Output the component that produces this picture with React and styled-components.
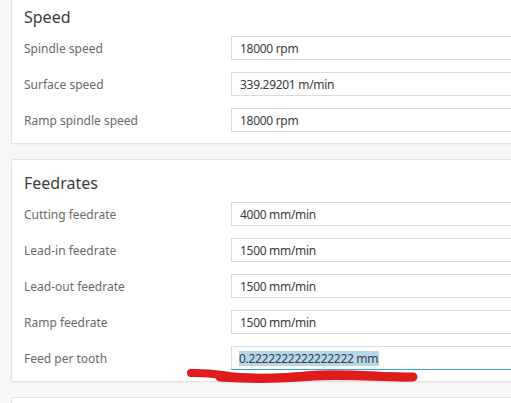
import React from 'react';
import styled, { createGlobalStyle } from 'styled-components';

const GlobalStyle = createGlobalStyle`
  html, body {
    margin: 0;
    padding: 0;
    background: #f7f7f7;
    overflow: hidden;
  }
  body {
    font-family: "Noto Sans", "Open Sans", sans-serif;
  }
`;

const Page = styled.div`
  position: relative;
  width: 640px;
  padding: 0 0 0 11px;
  margin-top: -7px;
  display: flex;
  flex-direction: column;
  gap: 15px;
`;

const Card = styled.section`
  background: #fff;
  border: 1px solid #e4e4e4;
  border-radius: 2px;
  box-shadow: 0 1px 2px rgba(0, 0, 0, 0.04);
  padding: 13px 0 11px 12px;
  min-height: ${(p) => p.$minHeight || 0}px;
`;

const Title = styled.h2`
  margin: 0 0 9px 0;
  font-size: 16px;
  line-height: 20px;
  font-weight: 400;
  color: #3c3c3c;
`;

const Rows = styled.div`
  display: flex;
  flex-direction: column;
  gap: 12px;
`;

const Row = styled.div`
  display: grid;
  grid-template-columns: 207px 1fr;
  align-items: center;
`;

const Label = styled.span`
  font-size: 12px;
  color: #6a6a6a;
`;

const Field = styled.div`
  height: 24px;
  box-sizing: border-box;
  border: 1px solid #dcdcdc;
  border-bottom: 1px solid ${(p) => (p.$active ? '#3b9fd1' : '#dcdcdc')};
  padding: 0 8px;
  display: flex;
  align-items: center;
  font-size: 12px;
  letter-spacing: -0.3px;
  color: #3c3c3c;
  background: #fff;
`;

const Selected = styled.span`
  background: #b5d7ec;
  line-height: 15px;
  padding: 0 1px 0 0;
  margin-left: -1px;
`;

const Mark = styled.svg`
  position: absolute;
  left: 180px;
  top: 372px;
  pointer-events: none;
`;

const speed = [
  ['Spindle speed', '18000 rpm'],
  ['Surface speed', '339.29201 m/min'],
  ['Ramp spindle speed', '18000 rpm'],
];

const feeds = [
  ['Cutting feedrate', '4000 mm/min'],
  ['Lead-in feedrate', '1500 mm/min'],
  ['Lead-out feedrate', '1500 mm/min'],
  ['Ramp feedrate', '1500 mm/min'],
];

const App = () => (
  <>
    <GlobalStyle />
    <Page>
      <Card>
        <Title>Speed</Title>
        <Rows>
          {speed.map(([label, value]) => (
            <Row key={label}>
              <Label>{label}</Label>
              <Field>{value}</Field>
            </Row>
          ))}
        </Rows>
      </Card>
      <Card>
        <Title>Feedrates</Title>
        <Rows>
          {feeds.map(([label, value]) => (
            <Row key={label}>
              <Label>{label}</Label>
              <Field>{value}</Field>
            </Row>
          ))}
          <Row>
            <Label>Feed per tooth</Label>
            <Field $active>
              <Selected>0.2222222222222222 mm</Selected>
            </Field>
          </Row>
        </Rows>
      </Card>
      <Card $minHeight={40} />
      <Mark width="245" height="22" viewBox="0 0 245 22">
        <path
          d="M11 8 C 30 7, 45 11, 60 12 C 90 14, 110 12, 130 10 C 165 7, 200 12, 233 12"
          stroke="#e01b1b"
          strokeWidth="8"
          strokeLinecap="round"
          fill="none"
        />
        <path
          d="M40 12 C 80 15, 110 13, 135 11 C 170 9, 205 13, 233 12"
          stroke="#e01b1b"
          strokeWidth="9"
          strokeLinecap="round"
          fill="none"
        />
      </Mark>
    </Page>
  </>
);

export default App;
